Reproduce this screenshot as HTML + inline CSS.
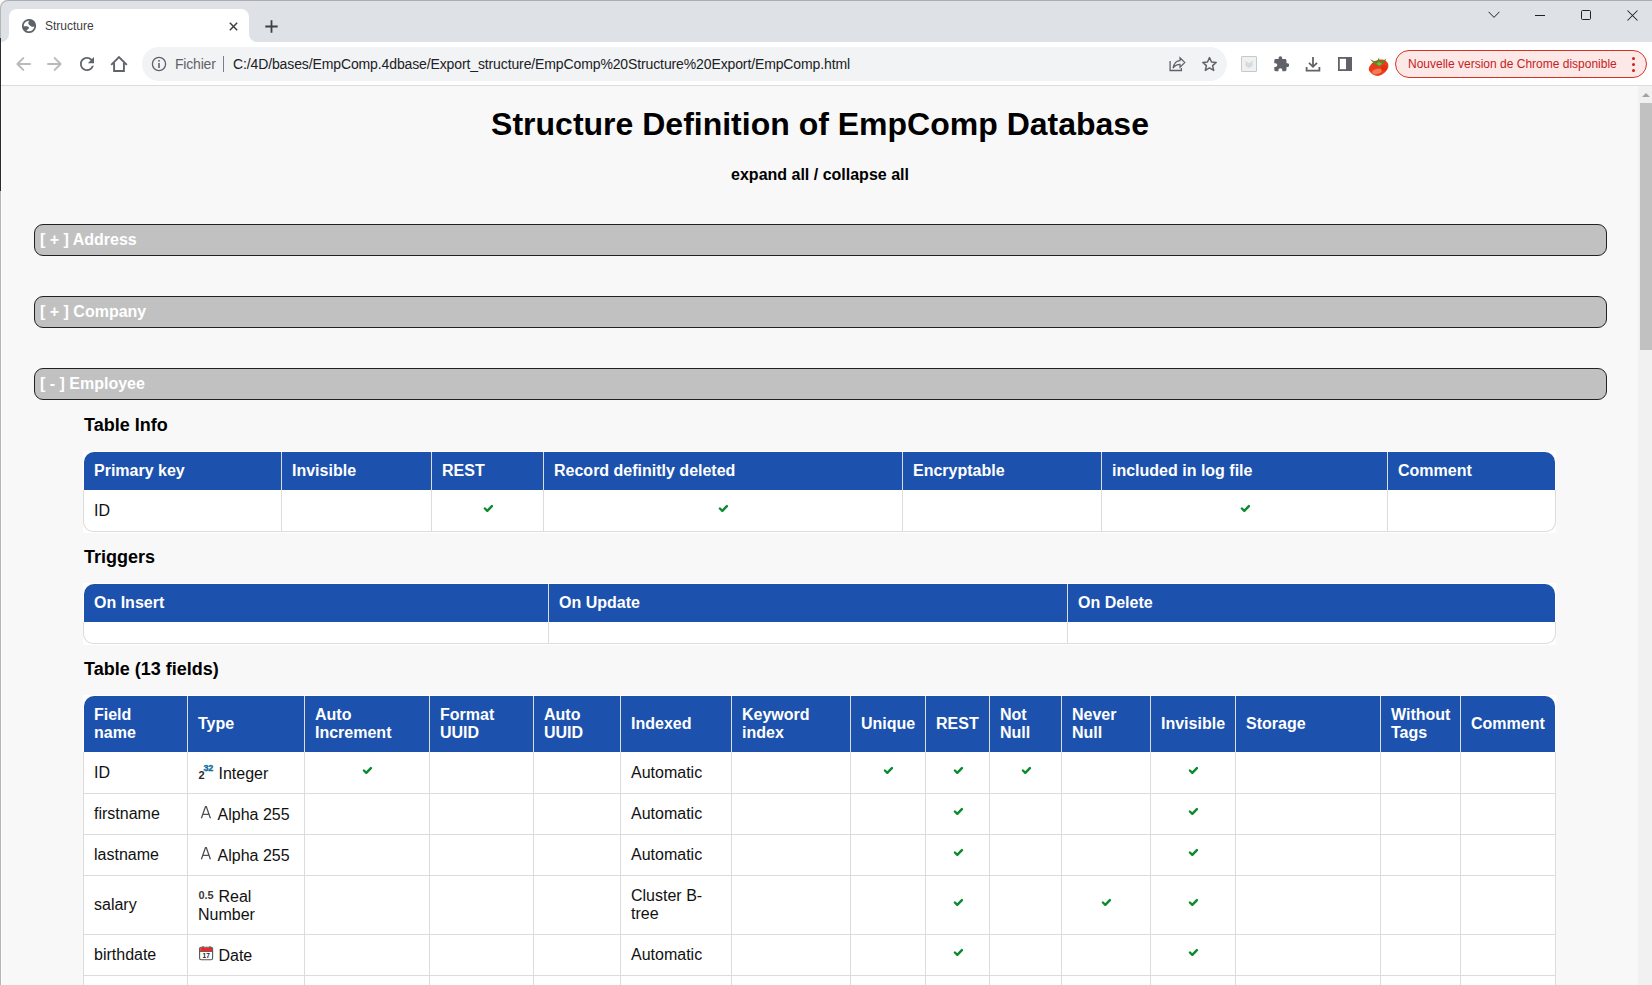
<!DOCTYPE html>
<html><head><meta charset="utf-8"><title>Structure</title>
<style>
*{box-sizing:border-box}
html,body{margin:0;padding:0;width:1652px;height:985px;overflow:hidden;background:#f8f8f8;font-family:"Liberation Sans",sans-serif}
#tabstrip{position:absolute;left:0;top:0;width:1652px;height:42px;background:#dee1e6;border-top:1px solid #aaacae;border-left:1px solid #b5b5b5;border-top-left-radius:8px}
#tab{position:absolute;left:9px;top:9px;width:240px;height:33px;background:#fff;border-radius:8px 8px 0 0}
#toolbar{position:absolute;left:0;top:42px;width:1652px;height:43px;background:#fff}
#tbline{position:absolute;left:0;top:85px;width:1652px;height:1px;background:#dadce0}
#omni{position:absolute;left:142px;top:47px;width:1085px;height:34px;border-radius:17px;background:#f1f3f4}
#page{position:absolute;left:0;top:86px;width:1638px;height:899px;background:#f8f8f8}
#sbtrack{position:absolute;left:1638px;top:86px;width:14px;height:899px;background:#f1f1f1}
#sbthumb{position:absolute;left:1640px;top:103px;width:12px;height:247px;background:#c1c1c1}
.bar{position:absolute;left:34px;width:1573px;height:32px;background:#c1c1c1;border:1px solid #222;border-radius:9px;color:#fff;font-weight:bold;font-size:16px;line-height:30px;padding-left:5px}
h1{position:absolute;margin:0;left:0;width:1640px;text-align:center;font-size:32px;line-height:37px;font-weight:bold;color:#000}
.ex{position:absolute;left:0;width:1640px;text-align:center;font-size:16px;line-height:18px;font-weight:bold;color:#000}
.h3{position:absolute;left:84px;font-size:18px;line-height:21px;font-weight:bold;color:#000}
.tb{position:absolute;background:#fff}
.tb>div{position:absolute}
.hd{background:#1c52ad;border-radius:10px 10px 0 0}
.th{color:#fff;font-weight:bold;font-size:16px;line-height:18px;padding:0 10px;display:flex;align-items:center}
.bd{border:1px solid #dcdcdc;border-top:none;border-radius:0 0 10px 10px}
.td{color:#111;font-size:16px;line-height:18px;padding:0 10px;display:flex;align-items:center}
.td.cc{justify-content:center}
.hs{height:1px;background:#dcdcdc}
.vs{width:1px;background:#dcdcdc}
.ck{display:block;position:relative;top:-2px;left:1px;overflow:visible}
.ty{position:relative;top:1px}
.ty .ic{position:relative;top:-1px}
.ic{vertical-align:-2px}
#wedge{position:absolute;left:0;top:0;width:12px;height:42px}
#winedge{position:absolute;left:0;top:38px;width:1px;height:153px;background:#2b2b2b}
#winl{position:absolute;left:0;top:8px;width:1px;height:977px;background:#b5b5b5}
#winw{position:absolute;left:1px;top:86px;width:1px;height:899px;background:#fdfdfd}
#tabtitle{position:absolute;left:45px;top:19px;font-size:12px;line-height:15px;color:#3c4043}
#fichier{position:absolute;left:175px;top:56px;font-size:14px;line-height:16px;color:#5f6368;letter-spacing:-0.2px}
#url{position:absolute;left:233px;top:56px;font-size:14px;line-height:16px;color:#202124;letter-spacing:-0.12px}
#pill{position:absolute;left:1395px;top:50px;width:252px;height:28px;border:1px solid #d93025;border-radius:14px;background:#fce8e6;color:#c5221f;font-size:12px;line-height:26px;padding-left:12px}
#sbarrow{position:absolute;left:1642px;top:93px;width:0;height:0;border-left:4px solid transparent;border-right:4px solid transparent;border-bottom:4px solid #a3a3a3}
</style></head><body>

<div id="tabstrip"></div>
<div id="wedge"></div>
<div id="tab"></div>
<svg style="position:absolute;left:1px;top:34px" width="8" height="8"><path d="M8 0 L8 8 L0 8 A8 8 0 0 0 8 0Z" fill="#fff"/></svg>
<svg style="position:absolute;left:249px;top:34px" width="8" height="8"><path d="M8 8 A8 8 0 0 1 0 0 L0 8Z" fill="#fff"/></svg>
<svg style="position:absolute;left:22px;top:19px" width="14" height="14" viewBox="0 0 14 14"><circle cx="7" cy="7" r="6.2" fill="#fff" stroke="#5f6368" stroke-width="1.7"/><path d="M8.8 0.6 C7.6 1.6 6.2 2.6 6.3 4.2 C6.4 5.6 8 6.4 9.4 7.6 C10.6 8.2 12.4 7.6 13.6 6.8 L13 3 L10.5 0.8Z" fill="#5f6368"/><path d="M0.4 7.2 L4.8 7.2 C6.4 7.4 7.3 8.2 6.8 9.4 C6.4 10.2 5.2 10.4 4.6 11 L4.6 13.6 L1.8 11.6 Z" fill="#5f6368"/></svg>
<div id="tabtitle">Structure</div>
<svg style="position:absolute;left:229px;top:22px" width="9" height="9" viewBox="0 0 9 9"><path d="M0.8 0.8 L8.2 8.2 M8.2 0.8 L0.8 8.2" stroke="#3c4043" stroke-width="1.5"/></svg>
<svg style="position:absolute;left:265px;top:20px" width="13" height="13" viewBox="0 0 13 13"><path d="M6.5 0.3 V12.7 M0.3 6.5 H12.7" stroke="#3c4043" stroke-width="1.8"/></svg>
<svg style="position:absolute;left:1488px;top:11px" width="12" height="8" viewBox="0 0 12 8"><path d="M0.6 0.8 L6 6.4 L11.4 0.8" fill="none" stroke="#202124" stroke-width="1"/></svg>
<div style="position:absolute;left:1535px;top:15px;width:10px;height:1px;background:#202124"></div>
<div style="position:absolute;left:1581px;top:10px;width:10px;height:10px;border:1px solid #202124;border-radius:1.5px"></div>
<svg style="position:absolute;left:1627px;top:10px" width="11" height="11" viewBox="0 0 11 11"><path d="M0.5 0.5 L10.5 10.5 M10.5 0.5 L0.5 10.5" stroke="#202124" stroke-width="1.05"/></svg>
<div id="toolbar"></div>
<svg style="position:absolute;left:15px;top:56px" width="16" height="16" viewBox="0 0 16 16"><path d="M15 8 H2.6 M8.3 2.1 L2.4 8 L8.3 13.9" fill="none" stroke="#b8babd" stroke-width="2" stroke-linecap="round" stroke-linejoin="round"/></svg>
<svg style="position:absolute;left:47px;top:56px" width="16" height="16" viewBox="0 0 16 16"><path d="M1 8 H13.4 M7.7 2.1 L13.6 8 L7.7 13.9" fill="none" stroke="#b8babd" stroke-width="2" stroke-linecap="round" stroke-linejoin="round"/></svg>
<svg style="position:absolute;left:80px;top:57px" width="14" height="14" viewBox="4 4 16 16"><path d="M17.65 6.35C16.2 4.9 14.21 4 12 4c-4.42 0-7.99 3.58-7.990 8s3.57 8 7.99 8c3.73 0 6.840-2.55 7.73-6h-2.08c-.82 2.33-3.04 4-5.65 4-3.31 0-6-2.69-6-6s2.69-6 6-6c1.66 0 3.14.69 4.22 1.78L13 11h7V4l-2.35 2.35z" fill="#5f6368"/></svg>
<svg style="position:absolute;left:110px;top:55px" width="18" height="18" viewBox="0 0 18 18"><path d="M1.2 9.8 L9 2 L16.8 9.8" fill="none" stroke="#5f6368" stroke-width="1.9"/><path d="M4.1 8 V16 H13.9 V8" fill="none" stroke="#5f6368" stroke-width="1.9"/></svg>
<div id="omni"></div>
<svg style="position:absolute;left:151px;top:56px" width="16" height="16" viewBox="0 0 16 16"><circle cx="8" cy="8" r="6.6" fill="none" stroke="#5f6368" stroke-width="1.3"/><rect x="7.2" y="7" width="1.6" height="5" fill="#5f6368"/><rect x="7.2" y="4" width="1.6" height="1.6" fill="#5f6368"/></svg>
<div id="fichier">Fichier</div>
<div style="position:absolute;left:223px;top:56px;width:1px;height:16px;background:#7b7f84"></div>
<div id="url">C:/4D/bases/EmpComp.4dbase/Export_structure/EmpComp%20Structure%20Export/EmpComp.html</div>
<svg style="position:absolute;left:1169px;top:56px" width="17" height="16" viewBox="0 0 17 16"><path d="M1.1 5 V14.5 H12.4 V12" fill="none" stroke="#5f6368" stroke-width="1.3"/><path d="M4 12.2 C5 7.4 8 4.6 11 4.6 V1.8 L15.8 6.5 L11 11.2 V8.4 C8 8.4 5.6 9.8 4 12.2Z" fill="none" stroke="#5f6368" stroke-width="1.2" stroke-linejoin="miter"/></svg>
<svg style="position:absolute;left:1200.5px;top:56px" width="17" height="16" viewBox="0 0 17 16"><path d="M8.5 1.6 L10.5 6 L15.2 6.4 L11.6 9.6 L12.7 14.4 L8.5 11.9 L4.3 14.4 L5.4 9.6 L1.8 6.4 L6.5 6 Z" fill="none" stroke="#5f6368" stroke-width="1.5" stroke-linejoin="round"/></svg>
<div style="position:absolute;left:1241px;top:56px;width:16px;height:16px;border:1px solid #c6c9cc;border-radius:1px;background:#eef0f2"></div>
<svg style="position:absolute;left:1244px;top:59px" width="10" height="10" viewBox="0 0 10 10"><path d="M1.5 1.5 L4 4 H6 L8.5 1.5 V7 L5 9 L1.5 7Z" fill="#d6dadd"/></svg>
<svg style="position:absolute;left:1273.5px;top:56px" width="15.5" height="15.5" viewBox="1.6 0.8 21.6 21.6"><path d="M20.5 11H19V7c0-1.1-.9-2-2-2h-4V3.5C13 2.12 11.88 1 10.5 1S8 2.12 8 3.5V5H4c-1.1 0-1.99.9-1.99 2v3.8H3.5c1.49 0 2.7 1.21 2.7 2.7s-1.21 2.7-2.7 2.7H2V20c0 1.1.9 2 2 2h3.8v-1.5c0-1.49 1.21-2.7 2.7-2.7 1.49 0 2.7 1.21 2.7 2.7V22H17c1.1 0 2-.9 2-2v-4h1.5c1.380 0 2.5-1.12 2.5-2.5S21.88 11 20.5 11z" fill="#5f6368"/></svg>
<svg style="position:absolute;left:1305px;top:56px" width="16" height="16" viewBox="0 0 16 16"><path d="M8 1 V10.6 M4 6.8 L8 10.8 L12 6.8" fill="none" stroke="#5f6368" stroke-width="1.8"/><path d="M1.6 11 V14.6 H14.4 V11" fill="none" stroke="#5f6368" stroke-width="1.8"/></svg>
<svg style="position:absolute;left:1337px;top:56px" width="16" height="16" viewBox="0 0 16 16"><rect x="1.9" y="1.9" width="12.2" height="12.2" fill="none" stroke="#5f6368" stroke-width="1.8"/><rect x="9" y="1" width="6" height="14" fill="#5f6368"/></svg>
<svg style="position:absolute;left:1364px;top:52px" width="28" height="26" viewBox="0 0 28 26"><defs><clipPath id="tc"><circle cx="14.5" cy="13" r="11"/></clipPath></defs><g clip-path="url(#tc)"><ellipse cx="14.5" cy="15.8" rx="10.4" ry="7.6" transform="rotate(-28 14.5 15.8)" fill="#ea3b1c"/><ellipse cx="13" cy="19.5" rx="5" ry="2.6" transform="rotate(-15 13 19.5)" fill="#f28c62" opacity="0.8"/><ellipse cx="20" cy="16" rx="3" ry="3" fill="#e52a10" opacity="0.7"/></g><path d="M6 7 L12.5 10.5 L15 5.5 L16 10.5 L22.5 6.5 L18.5 12.5 L14 14 L11 12.6Z" fill="#4e8f2a"/><path d="M12.5 11.5 L15.5 10 L18 12 L15 13.8Z" fill="#7bbd3a"/></svg>
<div id="pill">Nouvelle version de Chrome disponible</div>
<div style="position:absolute;left:1632px;top:57px;width:3px;height:3px;border-radius:50%;background:#c5221f"></div>
<div style="position:absolute;left:1632px;top:63px;width:3px;height:3px;border-radius:50%;background:#c5221f"></div>
<div style="position:absolute;left:1632px;top:69px;width:3px;height:3px;border-radius:50%;background:#c5221f"></div>
<div id="tbline"></div>

<div id="page"></div>
<h1 style="top:106px">Structure Definition of EmpComp Database</h1>
<div class="ex" style="top:166px">expand all / collapse all</div>
<div class="bar" style="top:224px">[ + ] Address</div>
<div class="bar" style="top:296px">[ + ] Company</div>
<div class="bar" style="top:368px">[ - ] Employee</div>
<div class="h3" style="top:415px">Table Info</div>
<div class="tb" style="left:83px;top:451px;width:1473px;height:82px">
<div class="hd" style="left:1px;top:1px;width:1471px;height:38px"></div>
<div class="th" style="left:1px;top:1px;width:197px;height:38px"><span>Primary key</span></div>
<div class="th" style="left:199px;top:1px;width:149px;height:38px"><span>Invisible</span></div>
<div class="th" style="left:349px;top:1px;width:111px;height:38px"><span>REST</span></div>
<div class="th" style="left:461px;top:1px;width:358px;height:38px"><span>Record definitly deleted</span></div>
<div class="th" style="left:820px;top:1px;width:198px;height:38px"><span>Encryptable</span></div>
<div class="th" style="left:1019px;top:1px;width:285px;height:38px"><span>included in log file</span></div>
<div class="th" style="left:1305px;top:1px;width:167px;height:38px"><span>Comment</span></div>
<div class="bd" style="left:0;top:39px;width:1473px;height:42px"></div>
<div class="td" style="left:1px;top:39px;width:197px;height:41px"><span>ID</span></div>
<div class="td" style="left:199px;top:39px;width:149px;height:41px"><span></span></div>
<div class="td cc" style="left:349px;top:39px;width:111px;height:41px"><span><svg class="ck" width="10" height="8" viewBox="0 0 10 8"><path d="M0.9 3.5 L3.3 5.8 L7.9 1.1" fill="none" stroke="#0b8a2e" stroke-width="2.4" stroke-linecap="round" stroke-linejoin="round"/></svg></span></div>
<div class="td cc" style="left:461px;top:39px;width:358px;height:41px"><span><svg class="ck" width="10" height="8" viewBox="0 0 10 8"><path d="M0.9 3.5 L3.3 5.8 L7.9 1.1" fill="none" stroke="#0b8a2e" stroke-width="2.4" stroke-linecap="round" stroke-linejoin="round"/></svg></span></div>
<div class="td" style="left:820px;top:39px;width:198px;height:41px"><span></span></div>
<div class="td cc" style="left:1019px;top:39px;width:285px;height:41px"><span><svg class="ck" width="10" height="8" viewBox="0 0 10 8"><path d="M0.9 3.5 L3.3 5.8 L7.9 1.1" fill="none" stroke="#0b8a2e" stroke-width="2.4" stroke-linecap="round" stroke-linejoin="round"/></svg></span></div>
<div class="td" style="left:1305px;top:39px;width:167px;height:41px"><span></span></div>
<div class="vs" style="left:198px;top:1px;height:80px"></div>
<div class="vs" style="left:348px;top:1px;height:80px"></div>
<div class="vs" style="left:460px;top:1px;height:80px"></div>
<div class="vs" style="left:819px;top:1px;height:80px"></div>
<div class="vs" style="left:1018px;top:1px;height:80px"></div>
<div class="vs" style="left:1304px;top:1px;height:80px"></div>
</div>
<div class="h3" style="top:547px">Triggers</div>
<div class="tb" style="left:83px;top:583px;width:1473px;height:62px">
<div class="hd" style="left:1px;top:1px;width:1471px;height:38px"></div>
<div class="th" style="left:1px;top:1px;width:464px;height:38px"><span>On Insert</span></div>
<div class="th" style="left:466px;top:1px;width:518px;height:38px"><span>On Update</span></div>
<div class="th" style="left:985px;top:1px;width:487px;height:38px"><span>On Delete</span></div>
<div class="bd" style="left:0;top:39px;width:1473px;height:22px"></div>
<div class="td" style="left:1px;top:39px;width:464px;height:21px"><span></span></div>
<div class="td" style="left:466px;top:39px;width:518px;height:21px"><span></span></div>
<div class="td" style="left:985px;top:39px;width:487px;height:21px"><span></span></div>
<div class="vs" style="left:465px;top:1px;height:60px"></div>
<div class="vs" style="left:984px;top:1px;height:60px"></div>
</div>
<div class="h3" style="top:659px">Table (13 fields)</div>
<div class="tb" style="left:83px;top:695px;width:1473px;height:323px">
<div class="hd" style="left:1px;top:1px;width:1471px;height:56px"></div>
<div class="th" style="left:1px;top:1px;width:103px;height:56px"><span>Field name</span></div>
<div class="th" style="left:105px;top:1px;width:116px;height:56px"><span>Type</span></div>
<div class="th" style="left:222px;top:1px;width:124px;height:56px"><span>Auto Increment</span></div>
<div class="th" style="left:347px;top:1px;width:103px;height:56px"><span>Format UUID</span></div>
<div class="th" style="left:451px;top:1px;width:86px;height:56px"><span>Auto UUID</span></div>
<div class="th" style="left:538px;top:1px;width:110px;height:56px"><span>Indexed</span></div>
<div class="th" style="left:649px;top:1px;width:118px;height:56px"><span>Keyword index</span></div>
<div class="th" style="left:768px;top:1px;width:74px;height:56px"><span>Unique</span></div>
<div class="th" style="left:843px;top:1px;width:63px;height:56px"><span>REST</span></div>
<div class="th" style="left:907px;top:1px;width:71px;height:56px"><span>Not Null</span></div>
<div class="th" style="left:979px;top:1px;width:88px;height:56px"><span>Never Null</span></div>
<div class="th" style="left:1068px;top:1px;width:84px;height:56px"><span>Invisible</span></div>
<div class="th" style="left:1153px;top:1px;width:144px;height:56px"><span>Storage</span></div>
<div class="th" style="left:1298px;top:1px;width:79px;height:56px"><span>Without Tags</span></div>
<div class="th" style="left:1378px;top:1px;width:94px;height:56px"><span>Comment</span></div>
<div class="bd" style="left:0;top:57px;width:1473px;height:265px"></div>
<div class="td" style="left:1px;top:57px;width:103px;height:41px"><span>ID</span></div>
<div class="td" style="left:105px;top:57px;width:116px;height:41px"><span><span class=ty><svg class="ic" width="16" height="16" viewBox="0 0 16 16"><text x="0.6" y="15" font-family="Liberation Sans" font-weight="bold" font-size="11" fill="#2a2a2a">2</text><text x="5.4" y="6.9" font-family="Liberation Sans" font-weight="bold" font-size="9" fill="#0f6b9c" stroke="#0f6b9c" stroke-width="0.35" letter-spacing="-0.2">32</text></svg> Integer</span></span></div>
<div class="td cc" style="left:222px;top:57px;width:124px;height:41px"><span><svg class="ck" width="10" height="8" viewBox="0 0 10 8"><path d="M0.9 3.5 L3.3 5.8 L7.9 1.1" fill="none" stroke="#0b8a2e" stroke-width="2.4" stroke-linecap="round" stroke-linejoin="round"/></svg></span></div>
<div class="td" style="left:347px;top:57px;width:103px;height:41px"><span></span></div>
<div class="td" style="left:451px;top:57px;width:86px;height:41px"><span></span></div>
<div class="td" style="left:538px;top:57px;width:110px;height:41px"><span>Automatic</span></div>
<div class="td" style="left:649px;top:57px;width:118px;height:41px"><span></span></div>
<div class="td cc" style="left:768px;top:57px;width:74px;height:41px"><span><svg class="ck" width="10" height="8" viewBox="0 0 10 8"><path d="M0.9 3.5 L3.3 5.8 L7.9 1.1" fill="none" stroke="#0b8a2e" stroke-width="2.4" stroke-linecap="round" stroke-linejoin="round"/></svg></span></div>
<div class="td cc" style="left:843px;top:57px;width:63px;height:41px"><span><svg class="ck" width="10" height="8" viewBox="0 0 10 8"><path d="M0.9 3.5 L3.3 5.8 L7.9 1.1" fill="none" stroke="#0b8a2e" stroke-width="2.4" stroke-linecap="round" stroke-linejoin="round"/></svg></span></div>
<div class="td cc" style="left:907px;top:57px;width:71px;height:41px"><span><svg class="ck" width="10" height="8" viewBox="0 0 10 8"><path d="M0.9 3.5 L3.3 5.8 L7.9 1.1" fill="none" stroke="#0b8a2e" stroke-width="2.4" stroke-linecap="round" stroke-linejoin="round"/></svg></span></div>
<div class="td" style="left:979px;top:57px;width:88px;height:41px"><span></span></div>
<div class="td cc" style="left:1068px;top:57px;width:84px;height:41px"><span><svg class="ck" width="10" height="8" viewBox="0 0 10 8"><path d="M0.9 3.5 L3.3 5.8 L7.9 1.1" fill="none" stroke="#0b8a2e" stroke-width="2.4" stroke-linecap="round" stroke-linejoin="round"/></svg></span></div>
<div class="td" style="left:1153px;top:57px;width:144px;height:41px"><span></span></div>
<div class="td" style="left:1298px;top:57px;width:79px;height:41px"><span></span></div>
<div class="td" style="left:1378px;top:57px;width:94px;height:41px"><span></span></div>
<div class="hs" style="left:0;top:98px;width:1473px"></div>
<div class="td" style="left:1px;top:99px;width:103px;height:40px"><span>firstname</span></div>
<div class="td" style="left:105px;top:99px;width:116px;height:40px"><span><span class=ty><svg class="ic" width="16" height="16" viewBox="0 0 16 16"><path d="M3.4 13.2 L7.5 1.6 L8.3 1.6 L12.4 13.2 M4.8 9.4 L10.9 9.4" fill="none" stroke="#505050" stroke-width="1.3"/></svg> Alpha 255</span></span></div>
<div class="td" style="left:222px;top:99px;width:124px;height:40px"><span></span></div>
<div class="td" style="left:347px;top:99px;width:103px;height:40px"><span></span></div>
<div class="td" style="left:451px;top:99px;width:86px;height:40px"><span></span></div>
<div class="td" style="left:538px;top:99px;width:110px;height:40px"><span>Automatic</span></div>
<div class="td" style="left:649px;top:99px;width:118px;height:40px"><span></span></div>
<div class="td" style="left:768px;top:99px;width:74px;height:40px"><span></span></div>
<div class="td cc" style="left:843px;top:99px;width:63px;height:40px"><span><svg class="ck" width="10" height="8" viewBox="0 0 10 8"><path d="M0.9 3.5 L3.3 5.8 L7.9 1.1" fill="none" stroke="#0b8a2e" stroke-width="2.4" stroke-linecap="round" stroke-linejoin="round"/></svg></span></div>
<div class="td" style="left:907px;top:99px;width:71px;height:40px"><span></span></div>
<div class="td" style="left:979px;top:99px;width:88px;height:40px"><span></span></div>
<div class="td cc" style="left:1068px;top:99px;width:84px;height:40px"><span><svg class="ck" width="10" height="8" viewBox="0 0 10 8"><path d="M0.9 3.5 L3.3 5.8 L7.9 1.1" fill="none" stroke="#0b8a2e" stroke-width="2.4" stroke-linecap="round" stroke-linejoin="round"/></svg></span></div>
<div class="td" style="left:1153px;top:99px;width:144px;height:40px"><span></span></div>
<div class="td" style="left:1298px;top:99px;width:79px;height:40px"><span></span></div>
<div class="td" style="left:1378px;top:99px;width:94px;height:40px"><span></span></div>
<div class="hs" style="left:0;top:139px;width:1473px"></div>
<div class="td" style="left:1px;top:140px;width:103px;height:40px"><span>lastname</span></div>
<div class="td" style="left:105px;top:140px;width:116px;height:40px"><span><span class=ty><svg class="ic" width="16" height="16" viewBox="0 0 16 16"><path d="M3.4 13.2 L7.5 1.6 L8.3 1.6 L12.4 13.2 M4.8 9.4 L10.9 9.4" fill="none" stroke="#505050" stroke-width="1.3"/></svg> Alpha 255</span></span></div>
<div class="td" style="left:222px;top:140px;width:124px;height:40px"><span></span></div>
<div class="td" style="left:347px;top:140px;width:103px;height:40px"><span></span></div>
<div class="td" style="left:451px;top:140px;width:86px;height:40px"><span></span></div>
<div class="td" style="left:538px;top:140px;width:110px;height:40px"><span>Automatic</span></div>
<div class="td" style="left:649px;top:140px;width:118px;height:40px"><span></span></div>
<div class="td" style="left:768px;top:140px;width:74px;height:40px"><span></span></div>
<div class="td cc" style="left:843px;top:140px;width:63px;height:40px"><span><svg class="ck" width="10" height="8" viewBox="0 0 10 8"><path d="M0.9 3.5 L3.3 5.8 L7.9 1.1" fill="none" stroke="#0b8a2e" stroke-width="2.4" stroke-linecap="round" stroke-linejoin="round"/></svg></span></div>
<div class="td" style="left:907px;top:140px;width:71px;height:40px"><span></span></div>
<div class="td" style="left:979px;top:140px;width:88px;height:40px"><span></span></div>
<div class="td cc" style="left:1068px;top:140px;width:84px;height:40px"><span><svg class="ck" width="10" height="8" viewBox="0 0 10 8"><path d="M0.9 3.5 L3.3 5.8 L7.9 1.1" fill="none" stroke="#0b8a2e" stroke-width="2.4" stroke-linecap="round" stroke-linejoin="round"/></svg></span></div>
<div class="td" style="left:1153px;top:140px;width:144px;height:40px"><span></span></div>
<div class="td" style="left:1298px;top:140px;width:79px;height:40px"><span></span></div>
<div class="td" style="left:1378px;top:140px;width:94px;height:40px"><span></span></div>
<div class="hs" style="left:0;top:180px;width:1473px"></div>
<div class="td" style="left:1px;top:181px;width:103px;height:58px"><span>salary</span></div>
<div class="td" style="left:105px;top:181px;width:116px;height:58px"><span><span class=ty><svg class="ic" width="16" height="16" viewBox="0 0 16 16"><text x="0.4" y="12" font-family="Liberation Sans" font-weight="bold" font-size="11" fill="#3a3a3a" letter-spacing="0">0.5</text></svg> Real Number</span></span></div>
<div class="td" style="left:222px;top:181px;width:124px;height:58px"><span></span></div>
<div class="td" style="left:347px;top:181px;width:103px;height:58px"><span></span></div>
<div class="td" style="left:451px;top:181px;width:86px;height:58px"><span></span></div>
<div class="td" style="left:538px;top:181px;width:110px;height:58px"><span>Cluster B-tree</span></div>
<div class="td" style="left:649px;top:181px;width:118px;height:58px"><span></span></div>
<div class="td" style="left:768px;top:181px;width:74px;height:58px"><span></span></div>
<div class="td cc" style="left:843px;top:181px;width:63px;height:58px"><span><svg class="ck" width="10" height="8" viewBox="0 0 10 8"><path d="M0.9 3.5 L3.3 5.8 L7.9 1.1" fill="none" stroke="#0b8a2e" stroke-width="2.4" stroke-linecap="round" stroke-linejoin="round"/></svg></span></div>
<div class="td" style="left:907px;top:181px;width:71px;height:58px"><span></span></div>
<div class="td cc" style="left:979px;top:181px;width:88px;height:58px"><span><svg class="ck" width="10" height="8" viewBox="0 0 10 8"><path d="M0.9 3.5 L3.3 5.8 L7.9 1.1" fill="none" stroke="#0b8a2e" stroke-width="2.4" stroke-linecap="round" stroke-linejoin="round"/></svg></span></div>
<div class="td cc" style="left:1068px;top:181px;width:84px;height:58px"><span><svg class="ck" width="10" height="8" viewBox="0 0 10 8"><path d="M0.9 3.5 L3.3 5.8 L7.9 1.1" fill="none" stroke="#0b8a2e" stroke-width="2.4" stroke-linecap="round" stroke-linejoin="round"/></svg></span></div>
<div class="td" style="left:1153px;top:181px;width:144px;height:58px"><span></span></div>
<div class="td" style="left:1298px;top:181px;width:79px;height:58px"><span></span></div>
<div class="td" style="left:1378px;top:181px;width:94px;height:58px"><span></span></div>
<div class="hs" style="left:0;top:239px;width:1473px"></div>
<div class="td" style="left:1px;top:240px;width:103px;height:40px"><span>birthdate</span></div>
<div class="td" style="left:105px;top:240px;width:116px;height:40px"><span><span class=ty><svg class="ic" width="16" height="16" viewBox="0 1 16 16"><rect x="1.6" y="2.2" width="13" height="12.6" rx="1.6" fill="#fff" stroke="#555" stroke-width="1.1"/><rect x="2.2" y="2.8" width="11.8" height="3.4" fill="#f22"/><path d="M2 6.4 H14.4" stroke="#555" stroke-width="1"/><path d="M5 1 V3.6 M12 1 V3.6" stroke="#555" stroke-width="1"/><text x="8.2" y="12.6" text-anchor="middle" font-family="Liberation Sans" font-weight="bold" font-size="6.5" fill="#222">17</text></svg> Date</span></span></div>
<div class="td" style="left:222px;top:240px;width:124px;height:40px"><span></span></div>
<div class="td" style="left:347px;top:240px;width:103px;height:40px"><span></span></div>
<div class="td" style="left:451px;top:240px;width:86px;height:40px"><span></span></div>
<div class="td" style="left:538px;top:240px;width:110px;height:40px"><span>Automatic</span></div>
<div class="td" style="left:649px;top:240px;width:118px;height:40px"><span></span></div>
<div class="td" style="left:768px;top:240px;width:74px;height:40px"><span></span></div>
<div class="td cc" style="left:843px;top:240px;width:63px;height:40px"><span><svg class="ck" width="10" height="8" viewBox="0 0 10 8"><path d="M0.9 3.5 L3.3 5.8 L7.9 1.1" fill="none" stroke="#0b8a2e" stroke-width="2.4" stroke-linecap="round" stroke-linejoin="round"/></svg></span></div>
<div class="td" style="left:907px;top:240px;width:71px;height:40px"><span></span></div>
<div class="td" style="left:979px;top:240px;width:88px;height:40px"><span></span></div>
<div class="td cc" style="left:1068px;top:240px;width:84px;height:40px"><span><svg class="ck" width="10" height="8" viewBox="0 0 10 8"><path d="M0.9 3.5 L3.3 5.8 L7.9 1.1" fill="none" stroke="#0b8a2e" stroke-width="2.4" stroke-linecap="round" stroke-linejoin="round"/></svg></span></div>
<div class="td" style="left:1153px;top:240px;width:144px;height:40px"><span></span></div>
<div class="td" style="left:1298px;top:240px;width:79px;height:40px"><span></span></div>
<div class="td" style="left:1378px;top:240px;width:94px;height:40px"><span></span></div>
<div class="hs" style="left:0;top:280px;width:1473px"></div>
<div class="td" style="left:1px;top:281px;width:103px;height:40px"><span></span></div>
<div class="td" style="left:105px;top:281px;width:116px;height:40px"><span></span></div>
<div class="td" style="left:222px;top:281px;width:124px;height:40px"><span></span></div>
<div class="td" style="left:347px;top:281px;width:103px;height:40px"><span></span></div>
<div class="td" style="left:451px;top:281px;width:86px;height:40px"><span></span></div>
<div class="td" style="left:538px;top:281px;width:110px;height:40px"><span></span></div>
<div class="td" style="left:649px;top:281px;width:118px;height:40px"><span></span></div>
<div class="td" style="left:768px;top:281px;width:74px;height:40px"><span></span></div>
<div class="td" style="left:843px;top:281px;width:63px;height:40px"><span></span></div>
<div class="td" style="left:907px;top:281px;width:71px;height:40px"><span></span></div>
<div class="td" style="left:979px;top:281px;width:88px;height:40px"><span></span></div>
<div class="td" style="left:1068px;top:281px;width:84px;height:40px"><span></span></div>
<div class="td" style="left:1153px;top:281px;width:144px;height:40px"><span></span></div>
<div class="td" style="left:1298px;top:281px;width:79px;height:40px"><span></span></div>
<div class="td" style="left:1378px;top:281px;width:94px;height:40px"><span></span></div>
<div class="vs" style="left:104px;top:1px;height:321px"></div>
<div class="vs" style="left:221px;top:1px;height:321px"></div>
<div class="vs" style="left:346px;top:1px;height:321px"></div>
<div class="vs" style="left:450px;top:1px;height:321px"></div>
<div class="vs" style="left:537px;top:1px;height:321px"></div>
<div class="vs" style="left:648px;top:1px;height:321px"></div>
<div class="vs" style="left:767px;top:1px;height:321px"></div>
<div class="vs" style="left:842px;top:1px;height:321px"></div>
<div class="vs" style="left:906px;top:1px;height:321px"></div>
<div class="vs" style="left:978px;top:1px;height:321px"></div>
<div class="vs" style="left:1067px;top:1px;height:321px"></div>
<div class="vs" style="left:1152px;top:1px;height:321px"></div>
<div class="vs" style="left:1297px;top:1px;height:321px"></div>
<div class="vs" style="left:1377px;top:1px;height:321px"></div>
</div>
<div id="sbtrack"></div><div id="sbthumb"></div><div id="sbarrow"></div><div id="winl"></div><div id="winedge"></div><div id="winw"></div>
</body></html>
